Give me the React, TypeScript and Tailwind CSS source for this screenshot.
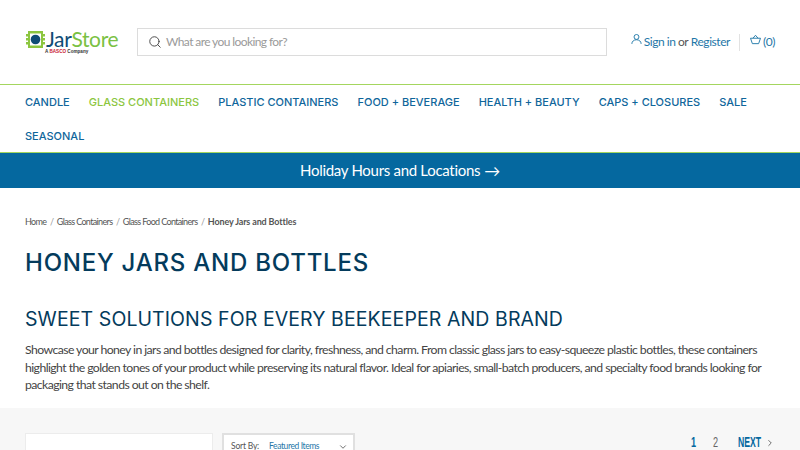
import { Search, ChevronDown, ChevronRight } from 'lucide-react';

const navItems = [
  'CANDLE',
  'GLASS CONTAINERS',
  'PLASTIC CONTAINERS',
  'FOOD + BEVERAGE',
  'HEALTH + BEAUTY',
  'CAPS + CLOSURES',
  'SALE',
  'SEASONAL',
];

function Logo() {
  return (
    <div className="flex w-[93px] shrink-0 flex-col">
      <div className="flex items-center">
        <svg width="19" height="19" viewBox="0 0 19 19" className="ml-[1px] shrink-0">
          <rect x="2" y="1" width="15" height="17" fill="#8cc63f" />
          <rect x="0" y="4" width="2" height="2.5" fill="#8cc63f" />
          <rect x="0" y="8" width="2" height="2.5" fill="#8cc63f" />
          <rect x="0" y="12" width="2" height="2.5" fill="#8cc63f" />
          <rect x="17" y="4" width="2" height="2.5" fill="#8cc63f" />
          <rect x="17" y="8" width="2" height="2.5" fill="#8cc63f" />
          <rect x="17" y="12" width="2" height="2.5" fill="#8cc63f" />
          <rect x="4" y="3.500" width="11" height="12" fill="#ffffff" />
          <circle cx="9.500" cy="9.500" r="4.800" fill="#0f4c75" />
        </svg>
        <span className="ml-[1px] font-['Lato',sans-serif] text-[21px] leading-[22px] font-normal tracking-[-0.35px] text-[#7ac143]">
          <span className="text-[#0f4c75]">Jar</span>Store
        </span>
      </div>
      <div className="mt-[-1px] ml-[20px] font-['Liberation_Sans',sans-serif] text-[4.600px] leading-[6px] font-bold whitespace-nowrap text-[#333333]">
        A <span className="text-[#c8202f]">BASCO</span> Company
      </div>
    </div>
  );
}

function UserIcon() {
  return (
    <svg width="11" height="13" viewBox="0 0 13 14" fill="none" stroke="#1f77a8" strokeWidth="1.1" className="mb-[6px]">
      <circle cx="6.500" cy="4" r="2.900" />
      <path d="M1 12.200c0-3 2.400-4.900 5.500-4.900S12 9.200 12 12.200" />
    </svg>
  );
}

function BasketIcon() {
  return (
    <svg width="11" height="11" viewBox="0 0 13 12" fill="none" stroke="#1f77a8" strokeWidth="1.1" className="mb-[6px]">
      <path d="M0.600 4.500h11.800L10.200 10.900H2.800z" strokeLinejoin="round" />
      <path d="M3.500 4.500L6.500 1l3 3.500" />
    </svg>
  );
}

export default function App() {
  return (
    <div className="h-[450px] w-[800px] overflow-hidden bg-white font-['Lato',sans-serif] text-[#4a4a4a]">
      <header className="flex h-[84px] items-center pr-[25px] pb-[1px] pl-[25px]">
        <Logo />
        <div className="ml-[19px] flex h-[28px] w-[470px] items-center border border-[#dcdcdc] pl-[10px]">
          <Search className="h-[14px] w-[14px] text-[#444444]" strokeWidth={1.6} />
          <span className="ml-[4px] pt-[1px] text-[12px] tracking-[-0.6px] text-[#9a9a9a]">What are you looking for?</span>
        </div>
        <div className="ml-auto flex items-center pt-[1px] text-[12px] tracking-[-0.45px]">
          <UserIcon />
          <a className="ml-[2px] text-[#1f77a8]">Sign in</a>
          <span className="mx-[2.500px] text-[#555555]">or</span>
          <a className="text-[#1f77a8]">Register</a>
          <div className="mx-[9.500px] h-[17px] w-px bg-[#e2e2e2]" />
          <BasketIcon />
          <span className="ml-[2px] text-[#1f77a8]">(0)</span>
        </div>
      </header>

      <nav className="flex h-[69px] flex-wrap content-start border-y border-[#a4d65e] pl-[25px]">
        {navItems.map((item) => (
          <a
            key={item}
            className={`mr-[19px] flex h-[34px] items-center font-['Inter',sans-serif] text-[11px] font-medium ${
              item === 'GLASS CONTAINERS' ? 'text-[#8cc63f]' : 'text-[#0f669b]'
            }`}
          >
            {item}
          </a>
        ))}
      </nav>

      <div className="flex h-[35px] items-center justify-center bg-[#05689f] text-[15px] tracking-[-0.3px] text-white">
        Holiday Hours and Locations<span className="ml-[4px] text-[16px]">→</span>
      </div>

      <main className="px-[25px] pt-[28px]">
        <div className="flex h-[12px] items-center text-[9px] tracking-[-0.65px] text-[#555555]">
          <span>Home</span>
          <span className="mx-[3.500px] text-[#999999]">/</span>
          <span>Glass Containers</span>
          <span className="mx-[3.500px] text-[#999999]">/</span>
          <span>Glass Food Containers</span>
          <span className="mx-[3.500px] text-[#999999]">/</span>
          <span className="font-bold tracking-[-0.14px]">Honey Jars and Bottles</span>
        </div>
        <h1 className="mt-[20px] font-['Inter',sans-serif] text-[24px] leading-[30px] font-medium tracking-[0.77px] text-[#043b5c]">
          HONEY JARS AND BOTTLES
        </h1>
        <h2 className="mt-[28px] font-['Inter',sans-serif] text-[19.500px] leading-[26px] font-normal tracking-[0.09px] text-[#043b5c]">
          SWEET SOLUTIONS FOR EVERY BEEKEEPER AND BRAND
        </h2>
        <p className="mt-[9px] w-[750px] text-[12.250px] leading-[17.500px] tracking-[-0.58px] text-[#444444]">
          Showcase your honey in jars and bottles designed for clarity, freshness, and charm. From classic glass jars to easy-squeeze plastic bottles, these containers highlight the golden tones of your product while preserving its natural flavor. Ideal for apiaries, small-batch producers, and specialty food brands looking for packaging that stands out on the shelf.
        </p>
      </main>

      <section className="mt-[14px] flex h-[60px] bg-[#f7f7f7] pt-[25px] pl-[25px]">
        <div className="h-[60px] w-[188px] border border-[#ececec] bg-white" />
        <div className="ml-[9px] flex h-[60px] w-[133px] items-start border-2 border-[#e0e0e0] bg-white pt-[5px] pr-[5px] pl-[7px] text-[8.500px] whitespace-nowrap">
          <span className="tracking-[-0.2px] text-[#555555]">Sort By:</span>
          <span className="ml-[10px] tracking-[-0.4px] text-[#1f77a8]">Featured Items</span>
          <ChevronDown className="mt-[2px] ml-auto h-[10px] w-[10px] text-[#555555]" />
        </div>
        <div className="ml-auto flex h-[20px] items-center pr-[25px] font-['Liberation_Sans',sans-serif] text-[14px]">
          <span className="w-[5px] origin-left scale-x-[0.65] font-bold text-[#05689f]">1</span>
          <span className="ml-[17px] w-[5px] origin-left scale-x-[0.65] text-[#666666]">2</span>
          <span className="ml-[20px] w-[23px] origin-left scale-x-[0.62] font-bold text-[#05689f]">NEXT</span>
          <ChevronRight className="ml-[4px] h-[10px] w-[10px] text-[#555555]" />
        </div>
      </section>
    </div>
  );
}
